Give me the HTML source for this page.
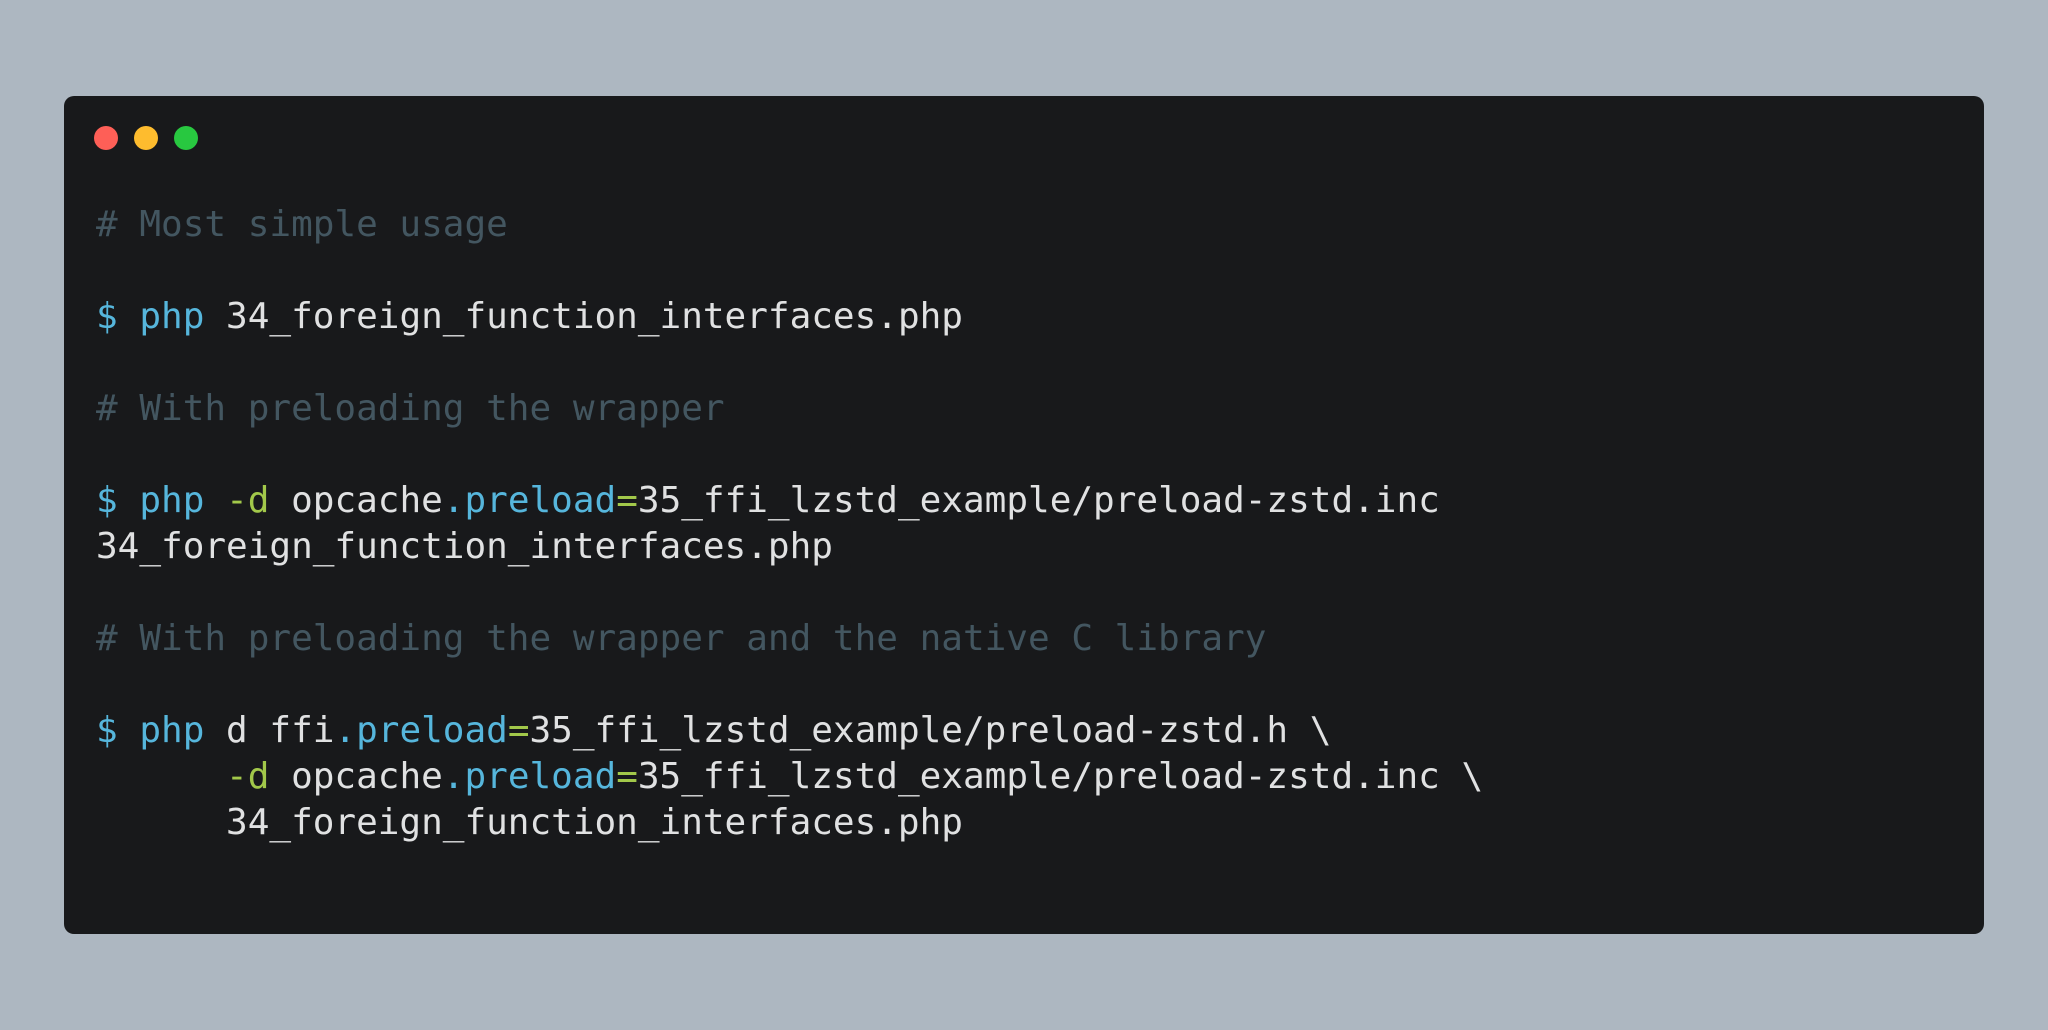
<!DOCTYPE html>
<html><head><meta charset="utf-8"><style>
html,body{margin:0;padding:0;width:2048px;height:1030px;background:#adb7c1;overflow:hidden}
.win{position:absolute;left:64px;top:96px;width:1920px;height:838px;background:#18191b;border-radius:10px}
.dot{position:absolute;top:126px;width:24px;height:24px;border-radius:50%}
pre{position:absolute;left:96px;top:202px;margin:0;font-family:"DejaVu Sans Mono","Liberation Mono",monospace;font-size:36px;line-height:46px;color:#e0e1e2}
.c{color:#435660}.b{color:#56b6dc}.g{color:#a2c84a}
</style></head><body>
<div class="win"></div>
<div class="dot" style="left:94px;background:#fe5f57"></div>
<div class="dot" style="left:134px;background:#febc2e"></div>
<div class="dot" style="left:174px;background:#28c840"></div>
<pre><span class="c"># Most simple usage</span>

<span class="b">$ php</span> 34_foreign_function_interfaces.php

<span class="c"># With preloading the wrapper</span>

<span class="b">$ php</span> <span class="g">-d</span> opcache<span class="b">.preload</span><span class="g">=</span>35_ffi_lzstd_example/preload-zstd.inc
34_foreign_function_interfaces.php

<span class="c"># With preloading the wrapper and the native C library</span>

<span class="b">$ php</span> d ffi<span class="b">.preload</span><span class="g">=</span>35_ffi_lzstd_example/preload-zstd.h \
      <span class="g">-d</span> opcache<span class="b">.preload</span><span class="g">=</span>35_ffi_lzstd_example/preload-zstd.inc \
      34_foreign_function_interfaces.php</pre>
</body></html>
